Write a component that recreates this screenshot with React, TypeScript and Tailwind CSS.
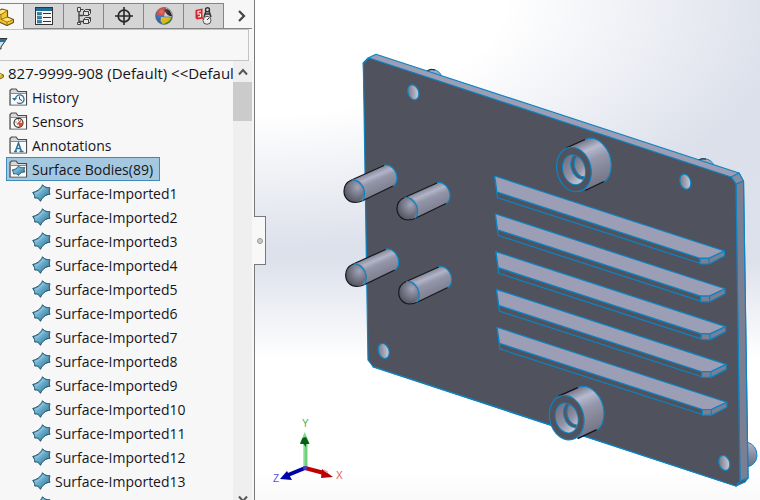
import React from "react";

const BLUE = "#0b84c4";

function SurfaceIcon() {
  return (
    <svg viewBox="0 0 19 18" className="h-[18px] w-[19px] shrink-0" aria-hidden="true">
      <path d="M0.700 8.500C4.500 7.500 8.500 5.500 10.500 0.800C12.500 3.200 15 4 18 3.800C17 6 17 8 18 10.200C14 10.500 10.500 13 8.500 17.300C7 14.500 5 13.500 2.700 14C3 12 2.200 10.500 0.700 8.500Z" fill="url(#surf)" stroke="#1b4e68" strokeWidth="1" strokeLinejoin="round" />
      <path d="M2.500 9.500C6 9 9.500 6.500 11.200 3" stroke="#9ad0e6" strokeWidth="0.800" fill="none" />
    </svg>
  );
}

function FolderIcon({ kind }: { kind: string }) {
  return (
    <svg viewBox="0 0 19 18" className="h-[18px] w-[19px] shrink-0" aria-hidden="true">
      <path d="M1 17V2.500L2.500 1H7L9 3.500H17.500V17Z" fill="#d9d9d9" stroke="#4a4a4a" strokeWidth="1.200" />
      <rect x="2" y="6" width="15" height="10.500" fill="#fafafa" />
      <path d="M1.500 5.500H17" stroke="#777" strokeWidth="0.800" />
      {kind === "history" && (
        <g fill="none" stroke="#2a7397" strokeWidth="1.300">
          <path d="M6.500 10.500A4.300 4.300 0 1 1 8 14.500" />
          <path d="M3 10H8L5.500 13Z" fill="#2a7397" stroke="none" />
          <path d="M10.500 8.500V11.200L13 12.500" stroke="#444" strokeWidth="1" />
        </g>
      )}
      {kind === "sensors" && (
        <g>
          <circle cx="9.500" cy="10.800" r="4.500" fill="#fff" stroke="#333" strokeWidth="1.200" />
          <path d="M9.500 10.800H14A4.500 4.500 0 0 1 10 15Z" fill="#e04a24" />
          <path d="M8 12.500L12 8.500" stroke="#e04a24" strokeWidth="1.400" />
          <path d="M6.500 10H7.500M9.500 7.500V8.500" stroke="#333" />
        </g>
      )}
      {kind === "annotations" && (
        <path d="M5 15.500H8M10.500 15.500H14.500M6.300 15.500L9.500 7L12.500 15.500M7.500 12.500H11.500" fill="none" stroke="#28749a" strokeWidth="1.500" />
      )}
      {kind === "surface" && (
        <path d="M3 10C6 9.500 8 8.500 9.500 6C11 7.500 13 8 15.800 7.500C15 9 15 10.500 15.800 12C13 12 11 13 9.500 15.500C8 14 7 13.500 4.500 14C4.500 12.500 4.200 11.500 3 10Z" fill="url(#surf)" stroke="#1b4e68" strokeWidth="0.800" />
      )}
    </svg>
  );
}

function PartIcon({ className }: { className: string }) {
  return (
    <svg viewBox="0 0 20 18" className={className} aria-hidden="true">
      <path d="M1 5L8 1L13.500 2.500V9L19.500 11.500V14.500L13 17.500L1 12Z" fill="#f2c632" stroke="#6f5410" strokeWidth="1.200" strokeLinejoin="round" />
      <path d="M1 5L7 6.500L13.500 2.500M7 6.500V11.500L13 14L19.500 11.500M13 14V17.500M7 11.500L13.500 9" fill="none" stroke="#8b6b14" strokeWidth="0.900" />
      <path d="M2.500 4.800L8 1.800L12 2.700L7 5.700ZM8.500 11.500L13.500 9.700L18 11.500L13 13.400Z" fill="#ffe680" />
    </svg>
  );
}

const tabs = [
  {
    label: "Property manager",
    icon: (
      <svg viewBox="0 0 18 18" className="size-[18px]">
        <rect x="0.500" y="0.500" width="17" height="17" fill="#f8f8f8" stroke="#333" />
        <rect x="1" y="1" width="16" height="3" fill="#1f6f9b" />
        <g fill="#2f86b0" stroke="#174d69" strokeWidth="0.500">
          <rect x="2.500" y="5.500" width="4" height="2.500" /><rect x="2.500" y="9.500" width="4" height="2.500" /><rect x="2.500" y="13.500" width="4" height="2.500" />
        </g>
        <path d="M8 6.500H16M8 10.500H16M8 14.500H16" stroke="#333" />
      </svg>
    ),
  },
  {
    label: "Configuration manager",
    icon: (
      <svg viewBox="0 0 18 18" className="size-[18px]" fill="#e4e4e4" stroke="#444">
        <path d="M4 4.500V17M4 8.500H8M4 14.500H8" fill="none" strokeWidth="1.400" />
        <path d="M2.500 0.500H5.500V4.500H2.500ZM2.500 15.500H5.500V17.500H2.500Z" />
        <path d="M8.500 4.500L10.500 2.500H15.500V6.500L13.500 8.500H8.500Z" />
        <path d="M8.500 12.500L10.500 10.500H15.500V14.500L13.500 16.500H8.500Z" />
        <path d="M5.500 2.500H8.500M8.500 4.500H13.500V8.500M13.500 4.500L15.500 2.500M8.500 12.500H13.500V16.500M13.500 12.500L15.500 10.500" fill="none" />
      </svg>
    ),
  },
  {
    label: "Dimension expert",
    icon: (
      <svg viewBox="0 0 18 18" className="size-[18px]" fill="none" stroke="#292929">
        <circle cx="9" cy="9" r="5.800" strokeWidth="1.700" />
        <path d="M9 0V18M0 9H18" strokeWidth="1.600" />
      </svg>
    ),
  },
  {
    label: "Display manager",
    icon: (
      <svg viewBox="0 0 18 18" className="size-[18px]">
        <circle cx="9" cy="9" r="8.500" fill="#2f6fc4" />
        <path d="M9 9.500L0.800 7A8.500 8.500 0 0 1 11 0.800Z" fill="#e03020" />
        <path d="M9 9.500L17.400 10A8.500 8.500 0 0 1 9 17.500Z" fill="#2fa344" />
        <path d="M6 10L16.500 10.500L14 14L8 17.400L5.500 14Z" fill="#f8d020" />
        <path d="M9 9.500L11 0.800A8.500 8.500 0 0 1 17.500 10Z" fill="#e2dfe2" />
        <path d="M9 3Q12 0.500 15 4L17.300 9.500Q12 9 9 3Z" fill="#351f22" />
        <circle cx="9" cy="9" r="8.500" fill="url(#shine)" stroke="#666" strokeWidth="0.500" />
      </svg>
    ),
  },
  {
    label: "CAM tools",
    icon: (
      <svg viewBox="0 0 18 18" className="size-[18px]" fill="none">
        <path d="M0.500 3L7.500 1.500V11.500L2 12.500L0.500 11Z" fill="#d9222a" />
        <path d="M6 4L3 4.500V7H5.500V9.500L3 10" stroke="#fff" strokeWidth="1.100" />
        <path d="M9 10L11 4M16 10L14 4M10.500 7H14.500" stroke="#333" strokeWidth="1.500" />
        <circle cx="12.500" cy="2.700" r="2" fill="#ddd" stroke="#333" strokeWidth="1.400" />
        <circle cx="12" cy="13.300" r="4" fill="#eee" stroke="#555" /><path d="M12 13L14 11" stroke="#333" /><path d="M7 10.500L9 12.500" stroke="#d9222a" strokeWidth="1.500" />
      </svg>
    ),
  },
];

const folders = [
  { name: "History", kind: "history" },
  { name: "Sensors", kind: "sensors" },
  { name: "Annotations", kind: "annotations" },
  { name: "Surface Bodies(89)", kind: "surface" },
];

function FeaturePanel() {
  return (
    <aside className="flex h-full w-[255px] shrink-0 flex-col border-r border-[#77797c] bg-[#f7f7f7]">
      <div className="flex h-[29px] shrink-0 items-stretch pt-[3px]" role="tablist">
        <button aria-label="Feature tree" className="flex w-[23px] shrink-0 items-center overflow-hidden border-t border-[#858585]">
          <PartIcon className="-ml-1.5 h-[18px] w-5 shrink-0" />
        </button>
        {tabs.map((t) => (
          <button key={t.label} aria-label={t.label} className="flex w-10 shrink-0 items-center justify-center border border-r-0 border-[#858585] bg-[#d5d5d5]">
            {t.icon}
          </button>
        ))}
        <div className="mr-0.5 flex flex-1 border-b border-l border-[#858585]">
          <button aria-label="More tabs" className="flex flex-1 items-center justify-center pl-2">
            <svg viewBox="0 0 8 12" className="h-3 w-2" fill="none" stroke="#444" strokeWidth="2.200"><path d="M1 1L6 6L1 11" /></svg>
          </button>
        </div>
      </div>
      <div className="mr-[5px] flex h-8 shrink-0 items-start border border-l-0 border-[#c4c4c4] pt-2">
        <button aria-label="Filter tree" className="w-2">
          <svg viewBox="0 0 8 12" className="h-3 w-2"><path d="M-1 0.500H7L1 9V11H-1Z" fill="#cfe3ec" stroke="#333" /><path d="M0 1H6.500L5 4H0Z" fill="#24709b" /></svg>
        </button>
      </div>
      <div className="flex min-h-0 flex-1">
        <ul className="min-w-0 flex-1 overflow-hidden text-sm leading-6">
          <li className="flex h-6 items-center gap-1 text-[15px] whitespace-nowrap">
            <span className="flex w-1 shrink-0 justify-end overflow-hidden"><PartIcon className="h-3.5 w-4 shrink-0" /></span>
            827-9999-908 (Default) &lt;&lt;Defaul
          </li>
          {folders.map((f) => (
            <li key={f.name} className="flex h-6 pl-1.5">
              <span className={f.kind === "surface" ? "flex items-center gap-1 border border-[#3f8ab8] bg-[#a5c8e1] pr-1.5 pl-0.5" : "flex items-center gap-1 border border-transparent pl-0.5"}>
                <FolderIcon kind={f.kind} />
                <span className="pt-0.5">{f.name}</span>
              </span>
            </li>
          ))}
          {Array.from({ length: 14 }, (_, i) => (
            <li key={i} className="flex h-6 items-center gap-1 pl-8">
              <SurfaceIcon />
              <span className="pt-0.5">Surface-Imported{i + 1}</span>
            </li>
          ))}
        </ul>
        <div className="mr-0.5 flex w-[19px] shrink-0 flex-col bg-[#efefef]">
          <button aria-label="Scroll up" className="flex h-[21px] items-center justify-center">
            <svg viewBox="0 0 10 8" className="h-2 w-2.5" fill="none" stroke="#555" strokeWidth="2"><path d="M1 6.500L5 2L9 6.500" /></svg>
          </button>
          <div className="h-[39px] bg-[#cbcbcb]" />
          <button aria-label="Scroll down" className="mt-auto flex h-[7px] justify-center overflow-hidden">
            <svg viewBox="0 0 10 8" className="mt-0.5 h-2 w-2.5 shrink-0" fill="none" stroke="#555" strokeWidth="2"><path d="M1 1.500L5 6L9 1.500" /></svg>
          </button>
        </div>
      </div>
    </aside>
  );
}

function Pin({ x, y }: { x: number; y: number }) {
  return (
    <g transform={`translate(${x} ${y})`} fill="none">
      <path d="M351.500 180L384 165.500C391 163 397 171 397 178C397 183 395 185 393 186L363 200.500C356 204 344 200 344 191C344 185 347 182 351.500 180Z" fill="url(#pin)" />
      <ellipse cx="354.300" cy="191" rx="10.300" ry="11.300" fill="url(#ball)" />
      <path d="M384 165.500L351.500 180C347 182 344 186 344 191C344 198 349 202.500 355 202.500Q359 202.500 363 200.500L393 186" stroke="#15171c" strokeWidth="1.200" />
      <path d="M384 165.300C390 163 397 171 397 178Q397 184 393 186M351.500 180C358 179 364.500 187 364.500 193Q364.500 199 362 201" stroke={BLUE} strokeWidth="1.200" />
    </g>
  );
}

function Boss({ x, y }: { x: number; y: number }) {
  return (
    <g transform={`translate(${x} ${y})`}>
      <path d="M566 148L585 139.500C597 134 611 148 611.300 165Q611 178 604 182L585 190.500Z" fill="url(#boss)" />
      <path d="M585 139.500C597 134 611 148 611.300 165Q611 178 604 182" fill="none" stroke={BLUE} strokeWidth="1.200" />
      <path d="M566 148L585 139.500M585 190.500L604 181.500" stroke="#111319" strokeWidth="1.300" />
      <ellipse cx="574" cy="169.500" rx="17" ry="22.500" transform="rotate(-14 574 169.500)" fill="#50525d" stroke={BLUE} strokeWidth="1.200" />
      <ellipse cx="574" cy="169.700" rx="11.200" ry="15.200" transform="rotate(-14 574 169.700)" fill="url(#bore)" stroke={BLUE} />
      <g clipPath="url(#boreClip)" fill="none">
        <ellipse cx="581" cy="166" rx="10" ry="13.500" transform="rotate(-14 581 166)" fill="#555762" stroke={BLUE} />
        <ellipse cx="582.500" cy="165.500" rx="8" ry="11.500" transform="rotate(-14 582.500 165.500)" fill="url(#bore)" stroke={BLUE} />
      </g>
    </g>
  );
}

function Model() {
  const slots = [0, 1, 2, 3, 4];
  const holes = [[413.3, 92.3], [685.3, 181.7], [383.7, 351], [724.3, 463]];
  return (
    <svg viewBox="255 0 505 500" preserveAspectRatio="xMinYMin meet" className="h-full w-full" role="img" aria-label="Imported plate model">
      <defs>
        <linearGradient id="surf" x1="0" y1="0" x2="1" y2="1"><stop offset="0" stopColor="#286f93" /><stop offset="0.400" stopColor="#76b8d5" /><stop offset="1" stopColor="#1c6388" /></linearGradient>
        <radialGradient id="shine" cx="0.350" cy="0.250" r="0.700"><stop offset="0" stopColor="#fff" stopOpacity="0.300" /><stop offset="1" stopColor="#000" stopOpacity="0.120" /></radialGradient>
        <linearGradient id="pin" gradientUnits="userSpaceOnUse" x1="368" y1="172" x2="378" y2="195"><stop offset="0" stopColor="#7e8092" /><stop offset="0.250" stopColor="#b2b4c8" /><stop offset="0.450" stopColor="#9395a8" /><stop offset="1" stopColor="#7b7d8e" /></linearGradient>
        <linearGradient id="bump" x1="0" y1="0" x2="0" y2="1"><stop offset="0" stopColor="#b4b6ca" /><stop offset="0.500" stopColor="#8c8ea1" /><stop offset="1" stopColor="#6c6e7e" /></linearGradient>
        <radialGradient id="ball" cx="0.650" cy="0.330" r="0.750"><stop offset="0" stopColor="#a2a4b8" /><stop offset="0.500" stopColor="#777989" /><stop offset="1" stopColor="#4d4f5a" /></radialGradient>
        <linearGradient id="boss" gradientUnits="userSpaceOnUse" x1="580" y1="142" x2="599" y2="185"><stop offset="0" stopColor="#767889" /><stop offset="0.220" stopColor="#b7b9cf" /><stop offset="0.450" stopColor="#9597aa" /><stop offset="1" stopColor="#737586" /></linearGradient>
        <linearGradient id="bore" x1="0.200" y1="0" x2="0.700" y2="1"><stop offset="0" stopColor="#6d6f7f" /><stop offset="0.550" stopColor="#9193a6" /><stop offset="1" stopColor="#d0d1dc" /></linearGradient>
        <linearGradient id="hole" x1="0" y1="0.300" x2="1" y2="0.700"><stop offset="0" stopColor="#737585" /><stop offset="1" stopColor="#d0d1de" /></linearGradient>
        <clipPath id="boreClip"><ellipse cx="574" cy="169.700" rx="10.700" ry="14.700" transform="rotate(-14 574 169.700)" /></clipPath>
      </defs>
      <path d="M426 72Q428 69 434 69.500Q440 71 442 77ZM697 161Q700 158 706 159Q712 160 714 166Z" fill="#a4a6b9" stroke={BLUE} />
      <path d="M427 71Q431 68 435 70M698 160Q702 158 706 159" fill="none" stroke="#202228" />
      <path d="M747 442Q757 445 757 456Q756 465 747 467Z" fill="url(#bump)" stroke={BLUE} />
      <g stroke={BLUE} strokeWidth="1.200" strokeLinejoin="round">
        <path d="M363.300 63L368 58L376 54.300L739 173L743.500 182L748 478L736 486L373 367Z" fill="#9b9eb5" />
        <path d="M736 184L743.500 181L748 478L740 482Z" fill="#7c7e92" />
        <path d="M731 177L739 173L743.500 181L736 184Z" fill="#898ba0" />
        <path d="M736 486L740 481L748 478L745 482Z" fill="#52545f" />
        <path d="M363.300 63L369 58L731 177L736 184L740 481.500L736 486L373 366.500L368 360Z" fill="#50525d" />
      </g>
      {slots.map((i) => (
        <g key={i} transform={`translate(${i * 0.6} ${i * 37.8})`} stroke={BLUE} strokeWidth="1.200" strokeLinejoin="round">
          <path d="M494.700 176L497.500 197.700L700 263.300V258L497 192" fill="#50525d" />
          <path d="M494.700 176L724.500 251L709 258.300H700L497 192Z" fill="#9b9eb5" />
          <path d="M700 258.300H709V264H700ZM709 258.300L724.500 251V256L709 264Z" fill="#7c7e91" />
        </g>
      ))}
      {holes.map(([x, y]) => (
        <ellipse key={x} cx={x} cy={y} rx="5.300" ry="7.700" transform={`rotate(-18 ${x} ${y})`} fill="url(#hole)" stroke={BLUE} strokeWidth="1.200" />
      ))}
      <Pin x={0} y={0} />
      <Pin x={53} y={17.5} />
      <Pin x={1.7} y={84} />
      <Pin x={54.7} y={101.5} />
      <Boss x={0} y={0} />
      <Boss x={-7.3} y={248.2} />
      <g>
        <path d="M305.500 468V442" stroke="#6fd07c" strokeWidth="4" /><path d="M304 468V444" stroke="#a9e8b0" strokeWidth="1" />
        <path d="M304.700 432L309.500 443H300Z" fill="#7ddb87" /><path d="M302.500 438L306 437L309.500 444H306V447L303.500 444H300Z" fill="#0a5a1a" />
        <path d="M305 468L324 473" stroke="#c00000" strokeWidth="4" /><path d="M322 469L333 477L321 478Z" fill="#b80000" /><path d="M324 470L328 472.500" stroke="#efa9a9" strokeWidth="2" />
        <path d="M305 468L288 475" stroke="#0000a8" strokeWidth="4" /><path d="M287 471L280 479L292 480Z" fill="#0000a8" />
        <circle cx="305" cy="468" r="2" fill="#3344dd" />
      </g>
      <g className="font-['Liberation_Sans',sans-serif] text-[10px]">
        <text x="302" y="427" fill="#4dab58">Y</text>
        <text x="336" y="479" fill="#f05555">X</text>
        <text x="273" y="482" fill="#5555ee">Z</text>
      </g>
    </svg>
  );
}

export default function App() {
  return (
    <div className="flex h-screen min-h-0 overflow-hidden bg-white font-['Open_Sans','Noto_Sans',sans-serif] text-sm text-[#16161a]">
      <FeaturePanel />
      <main className="relative min-w-0 flex-1 bg-[radial-gradient(ellipse_108%_50%_at_0%_0%,#ffffff_46%,#ffffff00_100%),linear-gradient(180deg,#dbdfea_0%,#dde1eb_52%,#ffffff_72%,#ffffff_94%,#f9f9fa_100%)]">
        <Model />
        <button aria-label="Collapse panel" className="absolute top-[216px] -left-px flex h-[49px] w-3 items-center justify-center border border-l-0 border-[#77797c] bg-[#f8f8f8]">
          <span className="size-1.5 rounded-full border border-[#999] bg-[#ccc]" />
        </button>
      </main>
    </div>
  );
}
